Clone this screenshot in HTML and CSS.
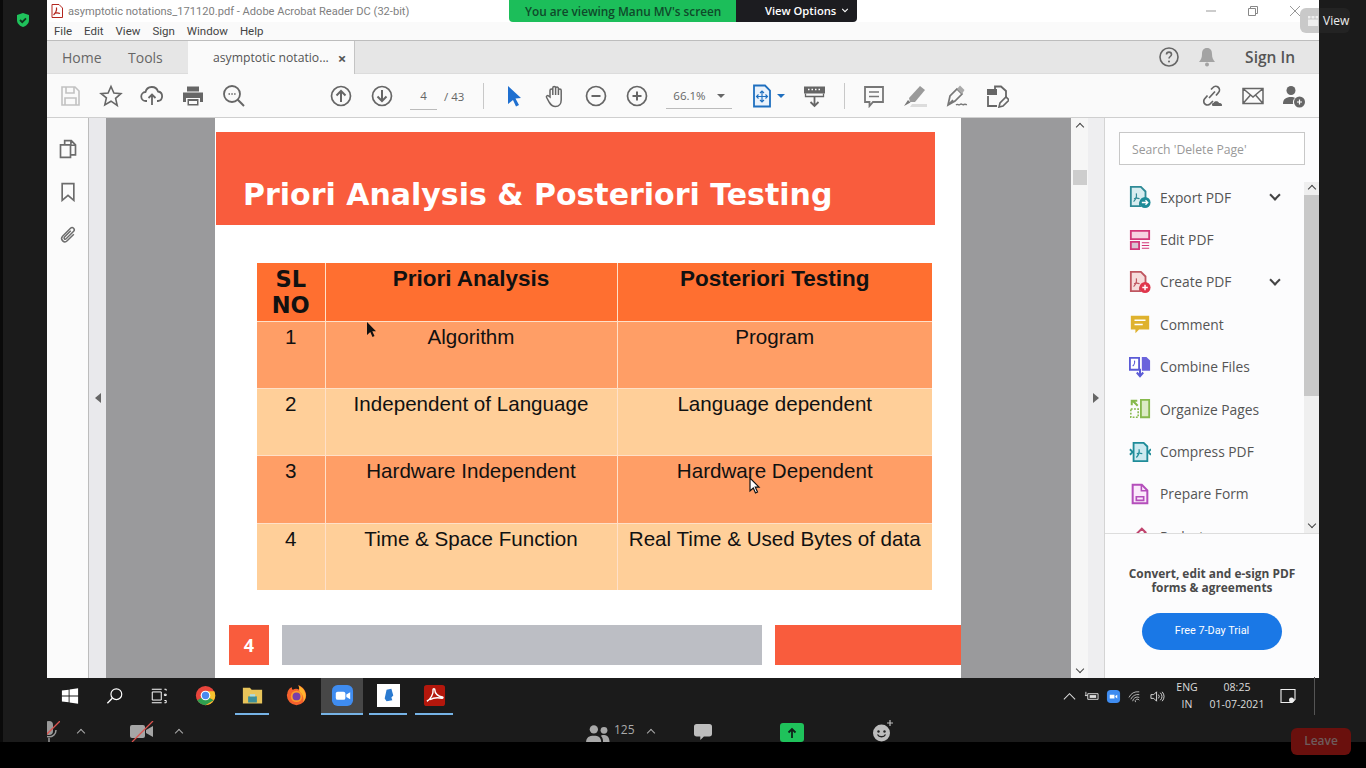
FILE: index.html
```html
<!DOCTYPE html>
<html>
<head>
    <title>asymptotic notations_171120.pdf - Adobe Acrobat Reader DC</title>
    <link rel="stylesheet" href="styles.css">
</head>
<body>
<div class="screen">
    <div class="shared">
        <div class="gutter">
            <svg class="shield" viewBox="0 0 16 16"><path d="M8 1l6 2v5c0 3.5-2.5 5.8-6 7-3.5-1.2-6-3.5-6-7V3z" fill="#1fc25b"/><path d="M5 8l2.2 2.2L11 6.3" fill="none" stroke="#10351f" stroke-width="1.8"/></svg>
        </div>

        <div class="desktop">
            <div class="acrobat">
                <div class="titlebar">
                    <svg class="pdf-mini" viewBox="0 0 12 14"><path d="M1 .5h7l3.5 3.5v9.5H1z" fill="#fff" stroke="#b3261e"/><path d="M2.5 11c2-1.5 3.5-5 3-7.5M3 9.5c2-.8 4-.8 6 0" fill="none" stroke="#b3261e" stroke-width="1.2"/></svg>
                    <span class="title-text">asymptotic notations_171120.pdf - Adobe Acrobat Reader DC (32-bit)</span>
                    <div class="win-controls">
                        <svg viewBox="0 0 12 12"><path d="M1 6h10" stroke="#999" fill="none"/></svg>
                        <svg viewBox="0 0 12 12"><path d="M1.5 3.5h7v7h-7zM3.5 3.5v-2h7v7h-2" stroke="#888" fill="none"/></svg>
                        <svg viewBox="0 0 12 12"><path d="M1 1l10 10M11 1L1 11" stroke="#999" fill="none"/></svg>
                    </div>
                </div>
                <div class="menubar">
                    <span>File</span><span>Edit</span><span>View</span><span>Sign</span><span>Window</span><span>Help</span>
                </div>
                <div class="tabbar">
                    <span class="tab-link tab-home">Home</span>
                    <span class="tab-link tab-tools">Tools</span>
                    <div class="tab-active"><span>asymptotic notatio...</span><b>×</b></div>
                    <div class="tab-right">
                        <svg class="ico" viewBox="0 0 24 24"><circle cx="12" cy="12" r="9" fill="none" stroke="#666" stroke-width="1.6"/><path d="M9.5 9.5c0-3.2 5-3.2 5 0 0 2-2.5 2-2.5 4" fill="none" stroke="#666" stroke-width="1.6"/><circle cx="12" cy="16.5" r="1" fill="#666"/></svg>
                        <svg class="ico" viewBox="0 0 24 24"><path d="M12 3c3.5 0 5 2.5 5 6 0 4 1 5.5 3 8H4c2-2.5 3-4 3-8 0-3.5 1.5-6 5-6z" fill="#a3a3a3"/><circle cx="12" cy="19.5" r="2" fill="#a3a3a3"/></svg>
                        <span class="sign-in">Sign In</span>
                    </div>
                </div>
                <div class="toolbar">
                    <div class="tool-group g-file">
                        <svg class="ico" viewBox="0 0 24 24"><path d="M4 3h13l4 4v14H4z M8 3v6h8V3 M7 21v-7h11v7" fill="none" stroke="#c2c2c2" stroke-width="1.6"/></svg>
                        <svg class="ico" viewBox="0 0 24 24"><path d="M12 2.5l2.9 6.5 7 .7-5.3 4.7 1.6 7L12 17.200l-6.200 3.700 1.600-7L2.100 9.700l7-.7z" fill="none" stroke="#666" stroke-width="1.6"/></svg>
                        <svg class="ico" viewBox="0 0 24 24"><path d="M7 17H6a4.5 4.5 0 0 1-.5-9A6.5 6.5 0 0 1 18 7.5a4.8 4.8 0 0 1 0 9.5h-1" fill="none" stroke="#666" stroke-width="1.8"/><path d="M12 21v-10M8.5 14l3.5-3.5 3.5 3.5" fill="none" stroke="#666" stroke-width="1.8"/></svg>
                        <svg class="ico" viewBox="0 0 24 24"><path d="M6 2.5h12v5H6zM2 8.5h20V18h-3v-4H5v4H2zM6.5 15h11v6.5h-11z" fill="#666"/><path d="M8 17h8v3H8z" fill="#fafafa"/></svg>
                        <svg class="ico" viewBox="0 0 24 24"><circle cx="10" cy="10" r="8" fill="none" stroke="#666" stroke-width="1.8"/><path d="M15.8 15.8L22 22" stroke="#666" stroke-width="2"/><path d="M6.5 10h1.500M9.300 10h1.500M12.100 10h1.500" stroke="#666" stroke-width="1.5"/></svg>
                    </div>
                    <div class="tool-group g-page">
                        <svg class="ico" viewBox="0 0 24 24"><circle cx="12" cy="12" r="9.5" fill="none" stroke="#666" stroke-width="1.7"/><path d="M12 18V7M7.5 11.5L12 7l4.5 4.5" fill="none" stroke="#666" stroke-width="2"/></svg>
                        <svg class="ico" viewBox="0 0 24 24"><circle cx="12" cy="12" r="9.5" fill="none" stroke="#666" stroke-width="1.7"/><path d="M12 6v11M7.5 12.5L12 17l4.5-4.5" fill="none" stroke="#666" stroke-width="2"/></svg>
                        <div class="page-box"><span class="page-num">4</span><span class="page-total">/&nbsp;43</span></div>
                    </div>
                    <div class="tool-sep sep-one"></div>
                    <div class="tool-group g-view">
                        <svg class="ico" viewBox="0 0 24 24"><path d="M6 2l13 12-5.5.5 3.5 6.500-3 1.500-3-6.500L6 20z" fill="#1e6fd0"/></svg>
                        <svg class="ico" viewBox="0 0 24 24"><path d="M7 13V6.5a1.4 1.4 0 0 1 2.800 0V11V4a1.4 1.4 0 0 1 2.800 0V11V4.500a1.4 1.4 0 0 1 2.800 0V11V6.500a1.4 1.4 0 0 1 2.800 0V16c0 3.500-2 6.500-5.800 6.500-3 0-4.500-1.500-6-4l-2.800-5c-.8-1.500 1-2.500 2-1.500z" fill="none" stroke="#666" stroke-width="1.5"/></svg>
                        <svg class="ico" viewBox="0 0 24 24"><circle cx="12" cy="12" r="9.5" fill="none" stroke="#666" stroke-width="1.7"/><path d="M7.5 12h9" stroke="#666" stroke-width="2"/></svg>
                        <svg class="ico" viewBox="0 0 24 24"><circle cx="12" cy="12" r="9.5" fill="none" stroke="#666" stroke-width="1.7"/><path d="M7.5 12h9M12 7.500v9" stroke="#666" stroke-width="2"/></svg>
                        <div class="zoom-box"><span>66.1%</span><i class="caret"></i></div>
                        <div class="fit-tool">
                            <svg class="ico" viewBox="0 0 24 24"><path d="M4 1.5h11l5 5v16H4z" fill="#eaf2fb" stroke="#1e6fbf" stroke-width="1.8"/><path d="M12 7v11M6.500 12.500h11M10 9l2-2 2 2M10 16l2 2 2-2M8.500 10.500l-2 2 2 2M15.500 10.500l2 2-2 2" fill="none" stroke="#1e6fbf" stroke-width="1.1"/></svg>
                            <i class="caret caret-blue"></i>
                        </div>
                        <svg class="ico" viewBox="0 0 24 24"><path d="M2 2.5h21v7H2z" fill="#666"/><path d="M6 5.500h1.500M9.500 5.500H11M13 5.500h1.500M16.500 5.500H18" stroke="#fff" stroke-width="1.5"/><path d="M3.5 9.500v3h18v-3" fill="none" stroke="#666" stroke-width="1.3"/><path d="M12.5 12v10M8.500 18l4 4 4-4" fill="none" stroke="#666" stroke-width="1.8"/></svg>
                    </div>
                    <div class="tool-sep sep-two"></div>
                    <div class="tool-group g-mark">
                        <svg class="ico" viewBox="0 0 24 24"><path d="M3 3h18v15H11l-3.500 4v-4H3z" fill="none" stroke="#777" stroke-width="1.8"/><path d="M7 8h10M7 12.500h10" stroke="#777" stroke-width="1.4"/></svg>
                        <svg class="ico" viewBox="0 0 24 24"><path d="M17 2l5 4-10 12H7l-1-4z" fill="#9a9a9a"/><path d="M5 16l2.500 2.500L1 22z" fill="#777"/><path d="M9 20h15v3H7z" fill="#dcdcdc"/></svg>
                        <svg class="ico" viewBox="0 0 24 24"><path d="M4 21l2-9 7-7 5 5-7 7zM4 21l5-5" fill="none" stroke="#777" stroke-width="1.7"/><path d="M13 5l3-3.500 4.500 4.500-2.500 4z" fill="#aaa"/><path d="M12 21c2-2 2 1 4-.5s2 1 4 0 1 .5 3 0" fill="none" stroke="#777" stroke-width="1.4"/></svg>
                        <svg class="ico" viewBox="0 0 24 24"><path d="M10 6V2.500h6l5 4.500v6M3 12v10h9" fill="none" stroke="#666" stroke-width="1.8"/><path d="M2 5h10v6H2z" fill="#666"/><path d="M14 23l1-4 6-6 3 3-6 6z" fill="none" stroke="#666" stroke-width="1.6"/></svg>
                    </div>
                    <div class="tool-group g-share">
                        <svg class="ico" viewBox="0 0 24 24"><path d="M9 14L15 7.500M11 5.500l2-2a3.500 3.500 0 0 1 5.500 5l-2.500 3M13 17l-2.500 2.500a3.500 3.500 0 0 1-6-4.500l3-3.500" fill="none" stroke="#666" stroke-width="1.7"/><path d="M13 22c-1.500-.3-1.500-3 .5-3 .5-2.500 5-2.500 5.500 0 2.500-.5 4 2.500 2.500 3z" fill="#666"/></svg>
                        <svg class="ico" viewBox="0 0 24 24"><path d="M2 4.500h20v15H2z M2 4.500l10 8.500 10-8.500M2 19.500l7.500-8.500M22 19.500L14.500 11" fill="none" stroke="#666" stroke-width="1.5"/></svg>
                        <svg class="ico" viewBox="0 0 24 24"><circle cx="9" cy="6.5" r="4.5" fill="#666"/><path d="M1 20c0-5 3-7 8-7 2 0 3 .3 4 1-2 1.500-2.500 4-1.800 6z" fill="#666"/><circle cx="17.5" cy="18" r="5.5" fill="#666"/><path d="M15 18h5M17.500 15.500v5" stroke="#fff" stroke-width="1.2"/></svg>
                    </div>
                </div>

                <div class="workspace">
                    <div class="nav-rail">
                        <svg viewBox="0 0 24 24"><path d="M8 6V2h8l5 5v12h-5M3 7h12v15H3z M15.500 2.500v5h5" fill="none" stroke="#6c6c6c" stroke-width="2"/></svg>
                        <svg viewBox="0 0 24 24"><path d="M5 2h14v20l-7-6-7 6z" fill="none" stroke="#6c6c6c" stroke-width="2"/></svg>
                        <svg viewBox="0 0 24 24"><path d="M19 11l-8 8c-3.500 3.500-9-1.500-5.500-5.500L15 4c2.500-2.500 6 1 3.800 3.500l-9 9c-1.500 1.500-3.500-.5-2-2l7.500-7.500" fill="none" stroke="#6c6c6c" stroke-width="1.8"/></svg>
                    </div>
                    <div class="collapse-strip strip-left"><i class="tri tri-left"></i></div>
                    <div class="doc-area">
                        <div class="page">
                            <div class="slide-title">Priori Analysis &amp; Posteriori Testing</div>
                            <table class="slide-table">
                                <tr class="row-head">
                                    <th class="col-no">SL NO</th><th class="col-a">Priori Analysis</th><th class="col-b">Posteriori Testing</th>
                                </tr>
                                <tr class="row-odd">
                                    <td>1</td><td>Algorithm</td><td>Program</td>
                                </tr>
                                <tr class="row-even">
                                    <td>2</td><td>Independent of Language</td><td>Language dependent</td>
                                </tr>
                                <tr class="row-odd row-tall">
                                    <td>3</td><td>Hardware Independent</td><td>Hardware Dependent</td>
                                </tr>
                                <tr class="row-even">
                                    <td>4</td><td>Time &amp; Space Function</td><td>Real Time &amp; Used Bytes of data</td>
                                </tr>
                            </table>
                            <div class="slide-footer">
                                <div class="foot-num">4</div>
                                <div class="foot-gray"></div>
                                <div class="foot-red"></div>
                            </div>
                        </div>
                    </div>
                    <div class="doc-scroll">
                        <i class="chev chev-up"></i>
                        <div class="doc-thumb"></div>
                        <i class="chev chev-down"></i>
                    </div>
                    <div class="collapse-strip strip-right"><i class="tri tri-right"></i></div>

                    <div class="side-panel">
                        <div class="search-wrap"><div class="search-box">Search 'Delete Page'</div></div>
                        <div class="tool-list-wrap">
                            <div class="tool-list">
                                <div class="tool-row">
                                    <svg class="tool-ico" viewBox="0 0 24 24"><path d="M2 1h11l5 5v8a6 6 0 0 0-6 8H2z" fill="#d8edf0" stroke="#2f8a96" stroke-width="2"/><path d="M5 17c2-2 3.500-6 3-9M5.500 14c2-1 4-1 6 0" fill="none" stroke="#2f8a96" stroke-width="1.3"/><circle cx="17.5" cy="18" r="6" fill="#1f8c99"/><path d="M14 18h6M18 15.500l2.500 2.500-2.500 2.500" fill="none" stroke="#fff" stroke-width="1.4"/></svg>
                                    <span>Export PDF</span><i class="row-chev"></i>
                                </div>
                                <div class="tool-row">
                                    <svg class="tool-ico" viewBox="0 0 24 24"><path d="M2 2h20v9H2z" fill="#f6d3e2" stroke="#d2387a" stroke-width="2"/><path d="M2 14h9v8H2z" fill="#d9c4d2" stroke="#d2387a" stroke-width="2"/><path d="M14 15h8M14 18h8M14 21h8" stroke="#d2387a" stroke-width="1.3"/></svg>
                                    <span>Edit PDF</span>
                                </div>
                                <div class="tool-row">
                                    <svg class="tool-ico" viewBox="0 0 24 24"><path d="M2 1h11l5 5v8a6 6 0 0 0-6 8H2z" fill="#f6dcdc" stroke="#bf5660" stroke-width="2"/><path d="M5 17c2-2 3.500-6 3-9M5.500 14c2-1 4-1 6 0" fill="none" stroke="#bf5660" stroke-width="1.3"/><circle cx="17.5" cy="18" r="6" fill="#e0364c"/><path d="M14.500 18h6M17.500 15v6" stroke="#fff" stroke-width="1.6"/></svg>
                                    <span>Create PDF</span><i class="row-chev"></i>
                                </div>
                                <div class="tool-row">
                                    <svg class="tool-ico" viewBox="0 0 24 24"><path d="M2 3h20v15H11l-4 4v-4H2z" fill="#dfb22e"/><path d="M6 8h12M6 12.500h9" stroke="#fff" stroke-width="1.6"/></svg>
                                    <span>Comment</span>
                                </div>
                                <div class="tool-row">
                                    <svg class="tool-ico" viewBox="0 0 24 24"><path d="M1 2h10v13H1z" fill="#fff" stroke="#5b5bd6" stroke-width="2"/><path d="M14 1h5l4 4v11h-9z" fill="#6a63dc"/><path d="M4 11c1.500-1 2.500-4 2-6" fill="none" stroke="#5b5bd6" stroke-width="1.3"/><path d="M12 14v7M8.500 18l3.500 4 3.500-4" fill="none" stroke="#5b5bd6" stroke-width="2.2"/></svg>
                                    <span>Combine Files</span>
                                </div>
                                <div class="tool-row">
                                    <svg class="tool-ico" viewBox="0 0 24 24"><path d="M2 12h8v9H2z" fill="none" stroke="#86b94c" stroke-width="1.7" stroke-dasharray="2 1.5"/><path d="M13 2h9v19h-9z" fill="#dcebc5" stroke="#86b94c" stroke-width="2"/><path d="M9 3L3 3v5M9.500 8.500L4 3" fill="none" stroke="#86b94c" stroke-width="2.2"/></svg>
                                    <span>Organize Pages</span>
                                </div>
                                <div class="tool-row">
                                    <svg class="tool-ico" viewBox="0 0 24 24"><path d="M5 2h11l4 4v16H5z" fill="#cdeaf0" stroke="#1f8c99" stroke-width="2"/><path d="M8 18c2-2 3.500-6 3-9M8.500 14c2-1 4-1 6 0" fill="none" stroke="#1f8c99" stroke-width="1.3"/><path d="M1 9l3 3-3 3M24 9l-3 3 3 3" fill="none" stroke="#1f8c99" stroke-width="2"/></svg>
                                    <span>Compress PDF</span>
                                </div>
                                <div class="tool-row">
                                    <svg class="tool-ico" viewBox="0 0 24 24"><path d="M4 2h10l6 6v14H4z" fill="#fbeafb" stroke="#b44ebb" stroke-width="2.2"/><path d="M13.500 2v6.500H20" fill="none" stroke="#b44ebb" stroke-width="1.7"/><path d="M8 15h8v4H8z" fill="none" stroke="#b44ebb" stroke-width="1.8"/></svg>
                                    <span>Prepare Form</span>
                                </div>
                                <div class="tool-row">
                                    <svg class="tool-ico" viewBox="0 0 24 24"><path d="M4 14L14 4l4 4-10 10H4z" fill="none" stroke="#c0446e" stroke-width="2.2"/></svg>
                                    <span>Redact</span>
                                </div>
                            </div>
                            <div class="panel-scroll">
                                <i class="chev chev-up"></i>
                                <div class="panel-thumb"></div>
                                <i class="chev chev-down"></i>
                            </div>
                        </div>
                        <div class="promo">
                            <p>Convert, edit and e-sign PDF</p>
                            <p>forms &amp; agreements</p>
                            <div class="trial-btn">Free 7-Day Trial</div>
                        </div>
                    </div>
                </div>
            </div>

            <div class="taskbar">
                <div class="task-icons">
                    <div class="task-cell"><svg viewBox="0 0 20 20"><path d="M1 4l7.500-1v6.500H1zM9.500 2.800L19 1.500v8H9.500zM1 10.500h7.500V17L1 16zM9.500 10.500H19v8l-9.500-1.300z" fill="#fff"/></svg></div>
                    <div class="task-cell"><svg viewBox="0 0 20 20"><circle cx="11.5" cy="8" r="6" fill="none" stroke="#fff" stroke-width="1.3"/><path d="M7 12.500l-5.500 5.500" stroke="#fff" stroke-width="1.5"/></svg></div>
                    <div class="task-cell"><svg viewBox="0 0 20 20"><path d="M2.500 5.500h10v9h-10zM2 2.500h11M2 17.500h11M16 2.500h2v1.500M16 8h2v1.500h-2zM16 15h2v2.500h-2" fill="none" stroke="#fff" stroke-width="1.1"/></svg></div>
                    <div class="task-cell"><svg class="app" viewBox="0 0 24 24"><circle cx="12" cy="12" r="11" fill="#e8453c"/><path d="M12 12L2.500 17.500A11 11 0 0 0 12 23l9.500-5.500z" fill="#2fa04f"/><path d="M12 12l9.500 5.500L12 23A11 11 0 0 0 22 7H12z" fill="#f7c32e"/><circle cx="12" cy="12" r="5.5" fill="#fff"/><circle cx="12" cy="12" r="4.2" fill="#4a8af0"/></svg></div>
                    <div class="task-cell is-open"><svg class="app" viewBox="0 0 24 24"><path d="M1 3h8l2 2.500h12V21H1z" fill="#e8c45a"/><path d="M7 13h10v7H7z" fill="#3b8f9c"/><path d="M9 13v-2.500h6V13" fill="#a8dbe6"/></svg></div>
                    <div class="task-cell"><svg class="app" viewBox="0 0 24 24"><path d="M1.500 10C2 5 5 3 7 2.500 6.500 4 7 5 8 5.500c2-1.500 5-1.500 7 0 .5-2 0-4-1-5.500 5 2 9 6.500 9 12a11 11 0 0 1-22 0c0-.7 0-1.300.5-2z" fill="#f5612d"/><path d="M14 .5c5 2 8.500 6.500 8.500 11.500 0 3-1 5.500-3 7.500 1-3 .5-8-3-11-1-1-1.500-1.500-1.500-3 .5-2 0-3.500-1-5z" fill="#ffb52e"/><circle cx="12" cy="13" r="6.5" fill="#ff9d2a"/><circle cx="12" cy="13" r="4.5" fill="#7a3fa8"/></svg></div>
                    <div class="task-cell is-open is-active"><svg class="app app-big" viewBox="0 0 24 24"><rect x="1" y="1" width="22" height="22" rx="6" fill="#3f8cf0"/><rect x="5" y="8" width="10" height="8.5" rx="2" fill="#fff"/><path d="M16 11l4-2.500v7.500l-4-2.500z" fill="#fff"/></svg></div>
                    <div class="task-cell is-open"><svg class="app app-big" viewBox="0 0 24 24"><path d="M0 0h24v24H0z" fill="#fff"/><path d="M10 6l5-1 2 7-2 2 1 3-6 1-2-3 2-9z" fill="#2a7ad0"/></svg></div>
                    <div class="task-cell is-open"><svg class="app app-big" viewBox="0 0 24 24"><rect x="1" y="1" width="22" height="22" rx="3" fill="#b4170c"/><path d="M4 18c4-2 7-8 6.500-12-.2-1.500 2-1.500 1.800 0 0 4 3.500 7 8 7.500 1 .3.500 1.500-.5 1.300-5.500-1-10 0-12.500 1.500" fill="none" stroke="#fff" stroke-width="1.5"/></svg></div>
                </div>
                <div class="tray">
                    <svg class="tray-ico" viewBox="0 0 16 16"><path d="M2 11l6-6 6 6" fill="none" stroke="#ddd" stroke-width="1.1"/></svg>
                    <svg class="tray-ico" viewBox="0 0 16 16"><path d="M4 5h11v6H4z" fill="none" stroke="#ddd"/><path d="M6 6.500h7v3H6z" fill="#ddd"/><path d="M1 7h3M2 3v4" stroke="#ddd"/></svg>
                    <svg class="tray-ico" viewBox="0 0 16 16"><rect x="1" y="1" width="14" height="14" rx="4" fill="#3f8cf0"/><path d="M4 6h5v4H4zM10 7.500l2-1.500v4l-2-1.500z" fill="#fff"/></svg>
                    <svg class="tray-ico" viewBox="0 0 16 16"><path d="M1 9a11 11 0 0 1 11-6M3 11a8 8 0 0 1 9-5M5 13a5 5 0 0 1 7-4M8 14a2 2 0 0 1 4-2" fill="none" stroke="#bbb" stroke-width="1"/></svg>
                    <svg class="tray-ico" viewBox="0 0 16 16"><path d="M1 6h3l3-3v10l-3-3H1zM9 6a3 3 0 0 1 0 4M11 4a6 6 0 0 1 0 8M13 3a8 8 0 0 1 0 10" fill="none" stroke="#ddd"/></svg>
                    <div class="tray-text tray-lang">ENG<br>IN</div>
                    <div class="tray-text tray-clock">08:25<br>01-07-2021</div>
                    <svg class="tray-note" viewBox="0 0 16 16"><path d="M1 1.500h14v10l-3 3H1z" fill="none" stroke="#eee" stroke-width="1.1"/><circle cx="11.5" cy="12" r="2.5" fill="#eee"/></svg>
                    <div class="tray-line"></div>
                </div>
            </div>

            <div class="zoom-bar">
                <svg class="zoom-mic" viewBox="0 0 22 22"><rect x="7" y="0" width="8" height="14" rx="4" fill="#9a9a9a"/><path d="M4 9c0 9 14 9 14 0M11 17v5" fill="none" stroke="#9a9a9a" stroke-width="1.5"/><path d="M0 22L22 0" stroke="#d9534f" stroke-width="1.3"/></svg>
                <i class="zoom-caret caret-mic"></i>
                <svg class="zoom-cam" viewBox="0 0 24 21"><rect x="0" y="4" width="15" height="13" rx="2" fill="#a5a5a5"/><path d="M16 9l7-4v11l-7-4z" fill="#a5a5a5"/><path d="M2 21L23 0" stroke="#d9534f" stroke-width="1.3"/></svg>
                <i class="zoom-caret caret-cam"></i>
                <div class="zoom-people">
                    <svg viewBox="0 0 26 20"><circle cx="8.5" cy="5" r="4.5" fill="#a8a8a8"/><circle cx="19.5" cy="6" r="3.7" fill="#a8a8a8"/><path d="M0 20c0-6 3-8 8.500-8s8 2 8 8z" fill="#a8a8a8"/><path d="M18 11c5 0 7.500 2 7.500 8h-7c0-3-.5-5-2.500-7z" fill="#a8a8a8"/></svg>
                    <span>125</span>
                </div>
                <i class="zoom-caret caret-people"></i>
                <svg class="zoom-chat" viewBox="0 0 22 20"><path d="M4 1h14a3 3 0 0 1 3 3v8a3 3 0 0 1-3 3h-6l-4 4v-4H4a3 3 0 0 1-3-3V4a3 3 0 0 1 3-3z" fill="#bdbdbd"/></svg>
                <div class="zoom-share">
                    <svg viewBox="0 0 12 12"><path d="M6 11V2M2.500 5.500L6 2l3.500 3.500" fill="none" stroke="#10201a" stroke-width="1.8"/></svg>
                </div>
                <svg class="zoom-react" viewBox="0 0 22 22"><circle cx="9.5" cy="13" r="8.5" fill="#bdbdbd"/><circle cx="6.5" cy="11.5" r="1.2" fill="#222"/><circle cx="12.5" cy="11.5" r="1.2" fill="#222"/><path d="M5.500 14.500c1.500 3 6.500 3 8 0" fill="none" stroke="#222" stroke-width="1.3"/><path d="M18 0v6M15 3h6" stroke="#bdbdbd" stroke-width="1.2"/></svg>
            </div>
        </div>

        <div class="right-gutter"></div>
    </div>

    <div class="black-bar"></div>

    <!-- zoom meeting overlays, they sit on top of the shared screen -->
    <div class="viewing-banner">
        <div class="banner-green">You are viewing Manu MV's screen</div>
        <div class="banner-dark">View Options <svg viewBox="0 0 10 6"><path d="M1.500 1L5 4.500 8.500 1" fill="none" stroke="#fff" stroke-width="1.3"/></svg></div>
    </div>
    <div class="view-btn">
        <svg viewBox="0 0 12 12"><path d="M1 1h10v10H1z" fill="#eee"/><path d="M1 4h10M4 1v3M8 1v3" stroke="#bbb" stroke-width=".8"/></svg>
        <span>View</span>
    </div>
    <div class="leave-btn">Leave</div>
    <svg class="cursor cursor-black" viewBox="0 0 12 18"><path d="M1 1v13l3.300-3 2.200 5 2-1-2.200-4.800H10z" fill="#111"/></svg>
    <svg class="cursor cursor-white" viewBox="0 0 12 18"><path d="M1 1v13l3.300-3 2.200 5 2-1-2.200-4.800H10z" fill="#fff" stroke="#111" stroke-width="1.2"/></svg>
</div>
</body>
</html>
```

FILE: styles.css
```css
*{box-sizing: border-box;}
html, body{margin: 0; height: 100%; overflow: hidden;}
body{background-color: #000; font-family: "Open Sans", "Liberation Sans", sans-serif;}
i{display: block;}
svg{display: block;}

.screen{position: relative; width: 1366px; height: 768px; overflow: hidden;}
.shared{display: flex; height: 742px; background-color: #1b1b1b;}
.black-bar{height: 26px; background-color: #000;}

.gutter{width: 47px; flex: none; border-left: 3px solid #0a0a0a; padding: 12px 0 0 12px;}
.shield{width: 16px; height: 16px;}
.right-gutter{width: 47px; flex: none;}

.desktop{width: 1272px; flex: none; display: flex; flex-direction: column;}
.acrobat{height: 678px; display: flex; flex-direction: column; background-color: #fafafa;}
.ico{width: 24px; height: 24px; flex: none;}

/* title and menu */
.titlebar{height: 22px; flex: none; display: flex; align-items: center; background-color: #fff; padding-left: 4px;}
.pdf-mini{width: 12px; height: 14px;}
.title-text{font-family: Roboto, sans-serif; font-size: 11.1px; color: #808080; margin-left: 5px; white-space: nowrap;}
.win-controls{margin-left: auto; display: flex; gap: 30px; padding-right: 18px;}
.win-controls svg{width: 12px; height: 12px;}

.menubar{height: 18px; flex: none; display: flex; align-items: center; gap: 12px; padding-left: 7px; font-family: Roboto, sans-serif; font-size: 11.5px; color: #444; background-color: #fafafa;}

/* tabs */
.tabbar{height: 34px; flex: none; display: flex; align-items: center; background-color: #e6e6e6; border-top: 1px solid #bdbdbd; border-bottom: 1px solid #dcdcdc;}
.tab-link{font-size: 14px; color: #666;}
.tab-home{margin-left: 15px; width: 66px;}
.tab-tools{width: 60px;}
.tab-active{height: 33px; width: 167px; display: flex; align-items: center; background-color: #fafafa; border-right: 1px solid #c4c4c4; padding-left: 25px; font-size: 12.2px; color: #555; white-space: nowrap; margin-bottom: -1px;}
.tab-active b{margin-left: 9px; font-size: 15px; color: #555;}
.tab-right{margin-left: auto; display: flex; align-items: center; gap: 14px; padding-right: 24px;}
.sign-in{font-size: 15.5px; font-weight: 600; color: #555; margin-left: 12px;}

/* toolbar */
.toolbar{height: 44px; flex: none; display: flex; align-items: center; background-color: #fafafa; border-bottom: 1px solid #cfcfcf; padding-top: 1px;}
.tool-group{display: flex; align-items: center; gap: 17px;}
.g-file{margin-left: 11px;}
.g-page{margin-left: 83px;}
.page-box{display: flex; align-items: center; font-size: 11.5px; color: #666; margin-left: -1px;}
.page-num{width: 27px; text-align: center; border-bottom: 1px solid #bbb; padding: 6px 0;}
.page-total{margin-left: 7px;}
.tool-sep{width: 1px; height: 26px; background-color: #c8c8c8; flex: none;}
.sep-one{margin-left: 19px;}
.g-view{margin-left: 18px;}
.zoom-box{width: 66px; height: 26px; display: flex; align-items: center; justify-content: space-between; padding: 0 7px; font-size: 11.5px; color: #666; border-bottom: 1px solid #bbb;}
.caret{width: 0; height: 0; border-left: 4px solid transparent; border-right: 4px solid transparent; border-top: 4px solid #666;}
.caret-blue{border-top-color: #1e6fbf;}
.fit-tool{display: flex; align-items: center; gap: 3px; margin-left: 1px;}
.sep-two{margin-left: 18px;}
.g-mark{margin-left: 17px;}
.g-share{margin-left: auto; padding-right: 13px;}

/* middle row */
.workspace{flex: 1; min-height: 0; display: flex;}
.nav-rail{width: 42px; flex: none; display: flex; flex-direction: column; align-items: center; gap: 23px; padding-top: 21px; background-color: #fbfbfb; border-right: 1px solid #bcbcbc;}
.nav-rail svg{width: 20px; height: 20px;}
.collapse-strip{width: 17px; flex: none; display: flex; align-items: center; justify-content: center; background-color: #e9e9ec;}
.strip-right{background-color: #eeeef0; border-right: 1px solid #d4d4d4;}
.tri{width: 0; height: 0; border-top: 5px solid transparent; border-bottom: 5px solid transparent;}
.tri-left{border-right: 6px solid #666;}
.tri-right{border-left: 6px solid #666;}

.doc-area{width: 965px; flex: none; overflow: hidden; background-color: #9a9a9c; padding-left: 109px;}
.page{width: 746px; height: 560px; background-color: #fff; padding-top: 14px; overflow: hidden;}
.slide-title{width: 719px; height: 93px; margin-left: 1px; padding: 45px 0 0 27px; background-color: #f95c3d; color: #fff; font-family: "DejaVu Sans", sans-serif; font-weight: 700; font-size: 30px; line-height: 36px; white-space: nowrap;}

.slide-table{margin: 38px 0 0 42px; width: 675px; table-layout: fixed; border-collapse: collapse; font-family: "Liberation Sans", sans-serif; font-size: 20.6px; color: #111;}
.slide-table th, .slide-table td{padding: 2px 4px 0; text-align: center; vertical-align: top; border-left: 1px solid #ffe0c8; border-top: 1px solid #ffe0c8; line-height: 26px; height: 67px;}
.slide-table tr th:first-child, .slide-table tr td:first-child{border-left: 0;}
.slide-table tr:first-child th{border-top: 0; height: 58px; padding-top: 3px;}
.slide-table .row-tall td{height: 68px;}
.col-no{width: 68px;}
.col-a{width: 292px;}
.row-head{background-color: #ff6f30;}
.row-head th{font-weight: 700; font-size: 22.5px; color: #111;}
.row-head .col-no{font-family: "DejaVu Sans", sans-serif;}
.row-odd{background-color: #ff9e66;}
.row-even{background-color: #ffcf99;}

.slide-footer{display: flex; gap: 13px; margin: 35px 0 0 14px; height: 40px;}
.foot-num{width: 40px; background-color: #f95c3d; color: #fff; font-weight: 700; font-size: 18px; display: flex; align-items: center; justify-content: center;}
.foot-gray{width: 480px; background-color: #bcbec4;}
.foot-red{width: 186px; background-color: #f95c3d;}

.doc-scroll{width: 17px; flex: none; background-color: #f6f6f6; padding: 6px 0; display: flex; flex-direction: column; align-items: center;}
.doc-thumb{width: 14px; height: 15px; background-color: #cdcdcd; margin-top: 40px; flex: none;}
.chev{width: 6px; height: 6px; border-left: 1.5px solid #444; border-top: 1.5px solid #444; flex: none;}
.chev-up{transform: rotate(45deg);}
.chev-down{transform: rotate(225deg); margin-top: auto;}

/* tools panel */
.side-panel{flex: 1; min-width: 0; display: flex; flex-direction: column; background-color: #fcfcfd;}
.search-wrap{height: 64px; flex: none; padding: 14px 14px 0;}
.search-box{height: 33px; width: 186px; border: 1px solid #c8c8c8; background-color: #fff; padding: 8px 0 0 12px; font-size: 12.2px; color: #999; line-height: 17px;}
.tool-list-wrap{height: 352px; flex: none; display: flex; overflow: hidden; border-bottom: 1px solid #ddd;}
.tool-list{width: 199px; flex: none; margin-top: -6px;}
.tool-row{height: 42.4px; display: flex; align-items: center; padding-left: 24px; font-size: 13.8px; color: #555; white-space: nowrap;}
.tool-ico{width: 22px; height: 22px; flex: none; margin-right: 9px;}
.row-chev{width: 8px; height: 8px; border-right: 2px solid #444; border-bottom: 2px solid #444; transform: rotate(45deg); margin-left: auto; margin-right: 25px; margin-top: -4px;}
.panel-scroll{width: 15px; flex: none; background-color: #efefef; display: flex; flex-direction: column; align-items: center; padding: 4px 0 6px;}
.panel-thumb{width: 15px; height: 201px; background-color: #c8c8c8; margin-top: 3px; flex: none;}
.promo{flex: 1; text-align: center; padding-top: 32px;}
.promo p{margin: 0; font-size: 11.9px; line-height: 14px; font-weight: 700; color: #4a4a4a; height: 14px;}
.trial-btn{width: 140px; height: 37px; margin: 19px auto 0; border-radius: 19px; background-color: #1a78e6; color: #fff; font-family: Roboto, sans-serif; font-size: 10.9px; line-height: 36px;}

/* windows taskbar */
.taskbar{height: 34px; flex: none; display: flex; justify-content: space-between;}
.task-icons{display: grid; grid-template-columns: 45px 45px 43px 51px 42px 46px 46px 46px 46px;}
.task-cell{height: 37px; display: flex; align-items: center; justify-content: center; position: relative; padding-bottom: 2px;}
.task-cell svg{width: 18px; height: 18px;}
.task-cell svg.app{width: 21px; height: 21px;}
.task-cell svg.app-big{width: 23px; height: 23px;}
.is-open::after{content: ""; position: absolute; left: 4px; right: 4px; bottom: 0; height: 2px; background-color: #76b3e6;}
.is-active{background-color: #474747; background-clip: padding-box; border-left: 2px solid transparent; border-right: 2px solid transparent;}
.is-active::after{left: 0; right: 0;}
.tray{display: flex; align-items: center; color: #ddd; padding-bottom: 2px; height: 38px;}
.tray-ico{width: 15px; height: 15px; margin-right: 7px;}
.tray-text{font-size: 10.5px; line-height: 17px; text-align: center; color: #ddd;}
.tray-lang{width: 28px; margin-left: 1px;}
.tray-clock{width: 60px; margin-left: 6px;}
.tray-note{width: 16px; height: 16px; margin-left: 13px;}
.tray-line{width: 1px; height: 38px; background-color: #555; margin-left: 18px; margin-right: 4px;}

/* zoom toolbar */
.zoom-bar{height: 30px; flex: none; display: flex; align-items: flex-start; padding-top: 9px; overflow: hidden; color: #aaa;}
.zoom-mic{width: 22px; height: 22px; margin-left: -9px; flex: none;}
.zoom-caret{width: 6px; height: 6px; border-left: 1.5px solid #aaa; border-top: 1.5px solid #aaa; transform: rotate(45deg); margin-top: 9px; flex: none;}
.caret-mic{margin-left: 18px;}
.zoom-cam{width: 24px; height: 21px; margin-left: 46px; flex: none;}
.caret-cam{margin-left: 22px;}
.zoom-people{display: flex; margin-left: 404px; font-size: 12px;}
.zoom-people svg{width: 24px; height: 20px; margin-top: 3px;}
.zoom-people span{margin-left: 4px;}
.caret-people{margin-left: 13px;}
.zoom-chat{width: 20px; height: 18px; margin-left: 39px; margin-top: 2px; flex: none;}
.zoom-share{width: 24px; height: 19px; margin-left: 67px; margin-top: 2px; border-radius: 3px; background-color: #1fc25b; display: flex; align-items: center; justify-content: center; flex: none;}
.zoom-share svg{width: 12px; height: 12px;}
.zoom-react{width: 22px; height: 22px; margin-left: 68px; margin-top: -1px; flex: none;}

/* overlays */
.viewing-banner{position: absolute; left: 509px; top: 0; width: 348px; height: 22px; display: flex; border-radius: 0 0 4px 4px; overflow: hidden; font-size: 11.8px; font-weight: 600;}
.banner-green{width: 227px; background-color: #1cbe5a; color: #0f4a2a; padding-left: 16px; line-height: 22px;}
.banner-dark{flex: 1; background-color: #1c1c20; color: #fff; display: flex; align-items: center; padding: 0 0 1px 29px; gap: 5px; font-size: 11.2px;}
.banner-dark svg{width: 8px; height: 5px;}
.view-btn{position: absolute; left: 1300px; top: 8px; width: 50px; height: 25px; border-radius: 6px; background: linear-gradient(90deg, #c9c9c9 0, #c9c9c9 19px, #232323 19px); display: flex; align-items: center; padding-left: 7px; font-size: 12px; color: #eee;}
.view-btn svg{width: 12px; height: 12px; margin-right: 4px;}
.leave-btn{position: absolute; left: 1291px; top: 728px; width: 60px; height: 27px; border-radius: 6px; background-color: #6a100d; color: #6e5c5c; font-size: 12px; font-weight: 600; text-align: center; line-height: 26px;}
.cursor{position: absolute; width: 12px; height: 18px;}
.cursor-black{left: 366px; top: 321px;}
.cursor-white{left: 749px; top: 477px;}
```
